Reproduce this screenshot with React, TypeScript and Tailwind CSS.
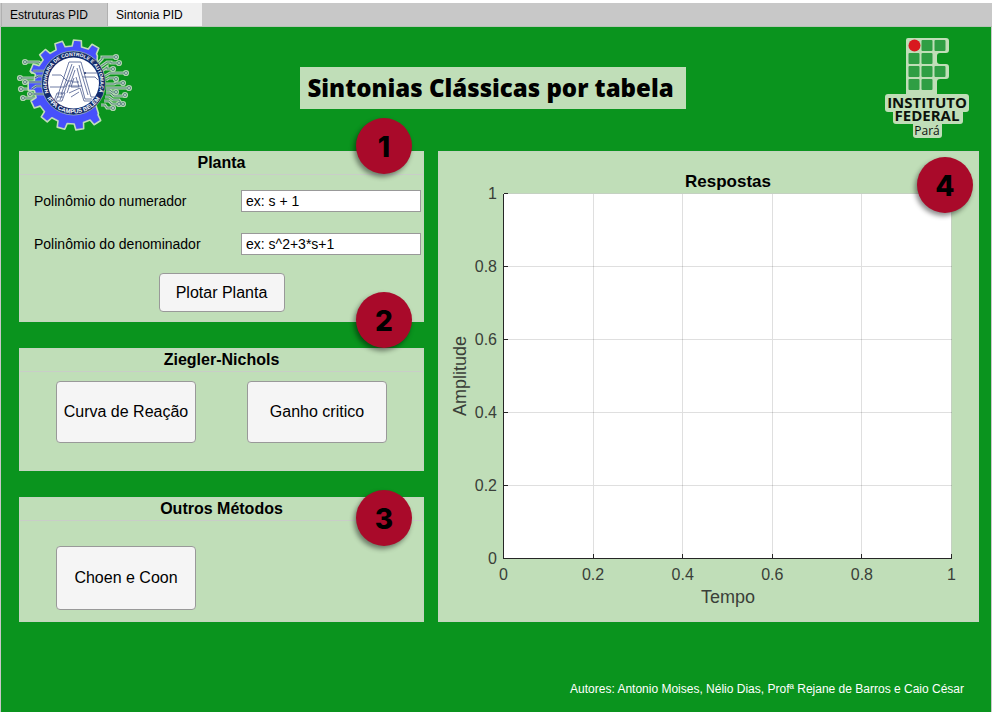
import type { ReactNode } from "react";

const TICKS = [0, 0.2, 0.4, 0.6, 0.8, 1];

function polar(cx: number, cy: number, r: number, deg: number) {
  const a = (deg * Math.PI) / 180;
  return `${(cx + r * Math.sin(a)).toFixed(2)},${(cy - r * Math.cos(a)).toFixed(2)}`;
}

// The gear covers the left side only; its last teeth sit at 30 and -213 degrees.
function gearPoints(cx: number, cy: number) {
  const pts: string[] = [polar(cx, cy, 31, -228), polar(cx, cy, 38, -222)];
  for (let i = 0; i <= 10; i++) {
    const a = -213 + i * 24.3;
    pts.push(
      polar(cx, cy, 39, a - 7),
      polar(cx, cy, 45, a - 5),
      polar(cx, cy, 45, a + 5),
      polar(cx, cy, 39, a + 7),
    );
  }
  pts.push(polar(cx, cy, 38, 40), polar(cx, cy, 31, 50));
  return pts.join(" ");
}

type Trace = [string, number, number];

const RIGHT_TRACES: Trace[] = [
  ["M78 29 L83 24 V22 H95", 97, 22],
  ["M81 32 L88 27 H92 V28 H98", 100, 28],
  ["M83 36 L88 32 V34 H92", 94, 34],
  ["M86 41 L91 38 H105", 107, 38],
  ["M87 45 L90 43 H95", 97, 44],
  ["M87 49 H95 L97 48 H102", 104, 48],
  ["M87 53 H108", 110, 53],
  ["M87 55 H91 L93 57 H95", 97, 57],
  ["M87 58 H92 L95 61 H104", 106, 60],
  ["M86 62 H90 L94 65 H100 L102 68", 104, 69],
  ["M85 66 H90 L93 69 H98", 100, 69],
  ["M82 70 H86 L88 73 H92", 94, 73],
];

const LEFT_TRACES: Trace[] = [
  ["M26 32 L20 27 H8", 6, 27],
  ["M30 36 H14", 14, 36],
  ["M28 41 H18 L16 43 H3", 1, 43],
  ["M28 47 H8", 6, 47],
  ["M26 51 H16 L13 54 H4", 2, 54],
  ["M26 59 H13", 11, 59],
  ["M30 63 H6", 4, 63],
];

function Traces({ traces }: { traces: Trace[] }) {
  return (
    <g fill="none">
      <g stroke="#b0d5ae" strokeWidth="3.2">
        {traces.map(([d, x, y]) => (
          <g key={d}>
            <path d={d} />
            <circle cx={x} cy={y} r="1.5" />
          </g>
        ))}
      </g>
      <g stroke="#527d80" strokeWidth="0.9">
        {traces.map(([d, x, y]) => (
          <g key={d}>
            <path d={d} />
            <circle cx={x} cy={y} r="1.5" fill="#c9e2c9" />
          </g>
        ))}
      </g>
    </g>
  );
}

function CourseLogo() {
  return (
    <svg width="118" height="100" viewBox="0 0 118 100" className="overflow-visible" role="img" aria-label="Engenharia de Controle e Automação">
      <defs>
        <path id="arc-top" d="M29.9 58.5 A26.8 26.8 0 1 1 79.1 58.5" />
        <path id="arc-bottom" d="M28.5 64 A30.6 30.6 0 0 0 80.5 64" />
      </defs>
      <Traces traces={RIGHT_TRACES} />
      <Traces traces={LEFT_TRACES} />
      <polygon points={gearPoints(54, 50)} fill="#4750fb" stroke="#c0deb8" strokeWidth="1.6" strokeLinejoin="round" />
      <path d="M14 36 H26 M16 43 L19 41 H24 M10 47 H22 M13 54 L17 51 H23 M15 59 H26" fill="none" stroke="#b0d5ae" strokeWidth="2.4" />
      <path d="M14 36 H30 M16 43 L19 41 H30 M10 47 H24 M13 54 L17 51 H24 M15 59 H30" fill="none" stroke="#2a3f8f" strokeWidth="0.9" />
      <circle cx="54.5" cy="48" r="32" fill="#122a6c" stroke="#c0deb8" strokeWidth="0.6" />
      <circle cx="54.5" cy="48" r="25.5" fill="#ffffff" />
      <g fill="none" stroke="#4a5a8e" strokeWidth="0.8">
        <path d="M39 60 L50 27 H62 L72 62 H77" />
        <path d="M42 60 L53 29 M45 58 L55 31 M48 58 L56 35 M60 30 L69 60 M58 33 L66 64 H73" />
        <path d="M55 43 L52 52 H60 L57 42 M49 51 H63 M53 47 H60" />
        <path d="M31 52 H46 L49 47 M33 40 H42 L48 46 H54 M66 38 H80 M64 42 H76 L79 45" />
        <path d="M38 58 H46 L43 66 H35 Z M40 59 L37 65 M44 58 L41 65 M38 62 H44" />
        <path d="M50 58 L61 53 L65 66 H72 M52 62 L60 57" />
      </g>
      <circle cx="66" cy="38" r="1" fill="#22356e" />
      <g fill="#ffffff" fontFamily="'Liberation Sans Narrow', 'Liberation Sans', Arial, sans-serif" fontWeight="700">
        <text fontSize="5">
          <textPath href="#arc-top" startOffset="50%" textAnchor="middle">ENGENHARIA DE CONTROLE E AUTOMAÇÃO</textPath>
        </text>
        <text fontSize="6">
          <textPath href="#arc-bottom" startOffset="50%" textAnchor="middle">IFPA CAMPUS BELÉM</textPath>
        </text>
      </g>
    </svg>
  );
}

const IF_CELLS = [
  [1, 0], [2, 0],
  [0, 1], [1, 1],
  [0, 2], [1, 2], [2, 2],
  [0, 3], [1, 3],
];

function InstituteLogo() {
  return (
    <svg width="86" height="102" viewBox="0 0 86 102" role="img" aria-label="Instituto Federal Pará">
      <g fill="#c0deb8">
        <path d="M24 1 H62 Q65 1 65 4 V13 Q65 16 62 16 H56 Q53 16 53 19 V24 Q53 27 56 27 H62 Q65 27 65 30 V39 Q65 42 62 42 H56 Q53 42 53 45 V57 H22 V3 Q22 1 24 1 Z" />
        <rect x="1" y="57" width="84" height="18" rx="3" />
        <rect x="9" y="70" width="70" height="17" rx="3" />
        <rect x="29" y="84" width="29" height="17" rx="3" />
      </g>
      {IF_CELLS.map(([c, r]) => (
        <rect key={`${c}-${r}`} x={24.5 + c * 13} y={3 + r * 13} width="11" height="11" rx="1" fill="#2f9e44" />
      ))}
      <circle cx="30.5" cy="8.5" r="6" fill="#d8181f" />
      <g fill="#0c120c" fontFamily="'Open Sans', 'Noto Sans', sans-serif" textAnchor="middle">
        <text x="43" y="71" fontSize="15" fontWeight="700">INSTITUTO</text>
        <text x="43" y="84" fontSize="15" fontWeight="700">FEDERAL</text>
        <text x="43" y="98" fontSize="12">Pará</text>
      </g>
    </svg>
  );
}

function Badge({ n, className }: { n: number; className: string }) {
  return (
    <span
      className={`absolute z-10 flex size-14 items-center justify-center rounded-full bg-[#a90a2a] pt-0.5 font-['Inter',sans-serif] text-[28px] font-extrabold text-black shadow-[-2px_3px_5px_rgba(0,0,0,0.45)] ${className}`}
    >
      {n}
    </span>
  );
}

function Panel({ title, badge, className, children }: { title: string; badge: ReactNode; className: string; children: ReactNode }) {
  return (
    <section className={`relative border border-[#c4d5c0] bg-[#c0deb8] ${className}`}>
      <h2 className="border-b border-[#c9cdc8] text-center text-base leading-[22px] font-bold">{title}</h2>
      {badge}
      {children}
    </section>
  );
}

function ActionButton({ className, children }: { className: string; children: ReactNode }) {
  return (
    <button type="button" className={`rounded-[4px] border border-[#999999] bg-[#f5f5f5] text-base whitespace-nowrap ${className}`}>
      {children}
    </button>
  );
}

function Field({ id, label, value }: { id: string; label: string; value: string }) {
  return (
    <div className="flex items-center justify-between pr-0.5 pl-3.5 text-sm">
      <label htmlFor={id}>{label}</label>
      <input id={id} type="text" defaultValue={value} className="h-[22px] w-[180px] border border-[#999999] bg-white px-1" />
    </div>
  );
}

function Chart() {
  const x = (t: number) => 64.5 + t * 448;
  const y = (t: number) => 406.5 - t * 365;
  return (
    <svg viewBox="0 0 539 469" className="block w-full" fontFamily="'Liberation Sans', Arial, sans-serif" role="img" aria-label="Respostas">
      <rect x={x(0)} y={y(1)} width="448" height="365" fill="#ffffff" />
      <g stroke="#262626" strokeOpacity="0.15" shapeRendering="crispEdges">
        {TICKS.map((t) => (
          <path key={t} d={`M${x(t)} ${y(0)} V${y(1)} M${x(0)} ${y(t)} H${x(1)}`} />
        ))}
      </g>
      <g stroke="#262626" fill="none" shapeRendering="crispEdges">
        <path d={`M${x(0)} ${y(1)} V${y(0)} H${x(1)}`} />
        {TICKS.map((t) => (
          <path key={t} d={`M${x(t)} ${y(0)} v-5 M${x(0)} ${y(t)} h4`} />
        ))}
      </g>
      <g fill="#3a3f39" fontSize="16">
        {TICKS.map((t) => (
          <text key={t} x={x(t)} y="428" textAnchor="middle">{t}</text>
        ))}
        {TICKS.map((t) => (
          <text key={t} x="58" y={y(t) + 5} textAnchor="end">{t}</text>
        ))}
      </g>
      <g fill="#3a3f39" fontSize="18" textAnchor="middle">
        <text x="289" y="451">Tempo</text>
        <text transform="translate(27 224) rotate(-90)">Amplitude</text>
      </g>
      <text x="289" y="35" fontSize="17" fontWeight="700" textAnchor="middle">Respostas</text>
    </svg>
  );
}

export default function App() {
  return (
    <div className="flex min-h-screen flex-col bg-white pt-[3px] font-['Liberation_Sans',Arial,sans-serif] text-black">
      <nav role="tablist" className="flex h-6 border-b border-[#b4c4b4] bg-[#c8c8c8] pl-px text-xs">
        <button type="button" role="tab" aria-selected="false" className="w-[106px] border-l border-[#b0b0b0] pl-2 text-left">
          Estruturas PID
        </button>
        <button type="button" role="tab" aria-selected="true" className="w-[95px] border-l border-[#b0b0b0] bg-[#f0f0f0] pl-2 text-left">
          Sintonia PID
        </button>
      </nav>
      <main className="flex grow flex-col border-x border-[#c8c8c8] bg-[#0a941e] pr-3 pl-[18px]">
        <header className="flex h-[124px] items-start justify-between">
          <div className="w-[118px] pt-2">
            <CourseLogo />
          </div>
          <h1 className="mt-10 bg-[#c0deb8] pr-3 pl-[7px] font-['Open_Sans','Noto_Sans',sans-serif] text-2xl leading-[42px] font-extrabold">
            Sintonias Clássicas por tabela
          </h1>
          <div className="flex w-[130px] justify-end pt-2.5 pr-[9px]">
            <InstituteLogo />
          </div>
        </header>
        <div className="grid grid-cols-[405fr_541fr] gap-x-3.5">
          <div className="flex flex-col gap-[26px]">
            <Panel title="Planta" className="h-[171px]" badge={<Badge n={1} className="-top-[34px] right-[11px]" />}>
              <div className="flex flex-col gap-[21px] pt-[15px]">
                <Field id="numerador" label="Polinômio do numerador" value="ex: s + 1" />
                <Field id="denominador" label="Polinômio do denominador" value="ex: s^2+3*s+1" />
              </div>
              <div className="mt-[18px] flex justify-center">
                <ActionButton className="h-[39px] w-[126px]">Plotar Planta</ActionButton>
              </div>
            </Panel>
            <Panel title="Ziegler-Nichols" className="h-[123px]" badge={<Badge n={2} className="-top-[57px] right-[11px]" />}>
              <div className="flex justify-between px-9 pt-[9px]">
                <ActionButton className="h-[62px] w-[140px]">Curva de Reação</ActionButton>
                <ActionButton className="h-[62px] w-[140px]">Ganho critico</ActionButton>
              </div>
            </Panel>
            <Panel title="Outros Métodos" className="h-[125px]" badge={<Badge n={3} className="-top-2 right-[11px]" />}>
              <div className="px-9 pt-[25px]">
                <ActionButton className="h-16 w-[140px]">Choen e Coon</ActionButton>
              </div>
            </Panel>
          </div>
          <section className="relative border border-[#c4d5c0] bg-[#c0deb8]">
            <Badge n={4} className="top-[5px] right-[5px]" />
            <Chart />
          </section>
        </div>
        <footer className="mt-auto pr-[15px] pb-[15px] text-right text-xs text-white">
          Autores: Antonio Moises, Nélio Dias, Profª Rejane de Barros e Caio César
        </footer>
      </main>
    </div>
  );
}
